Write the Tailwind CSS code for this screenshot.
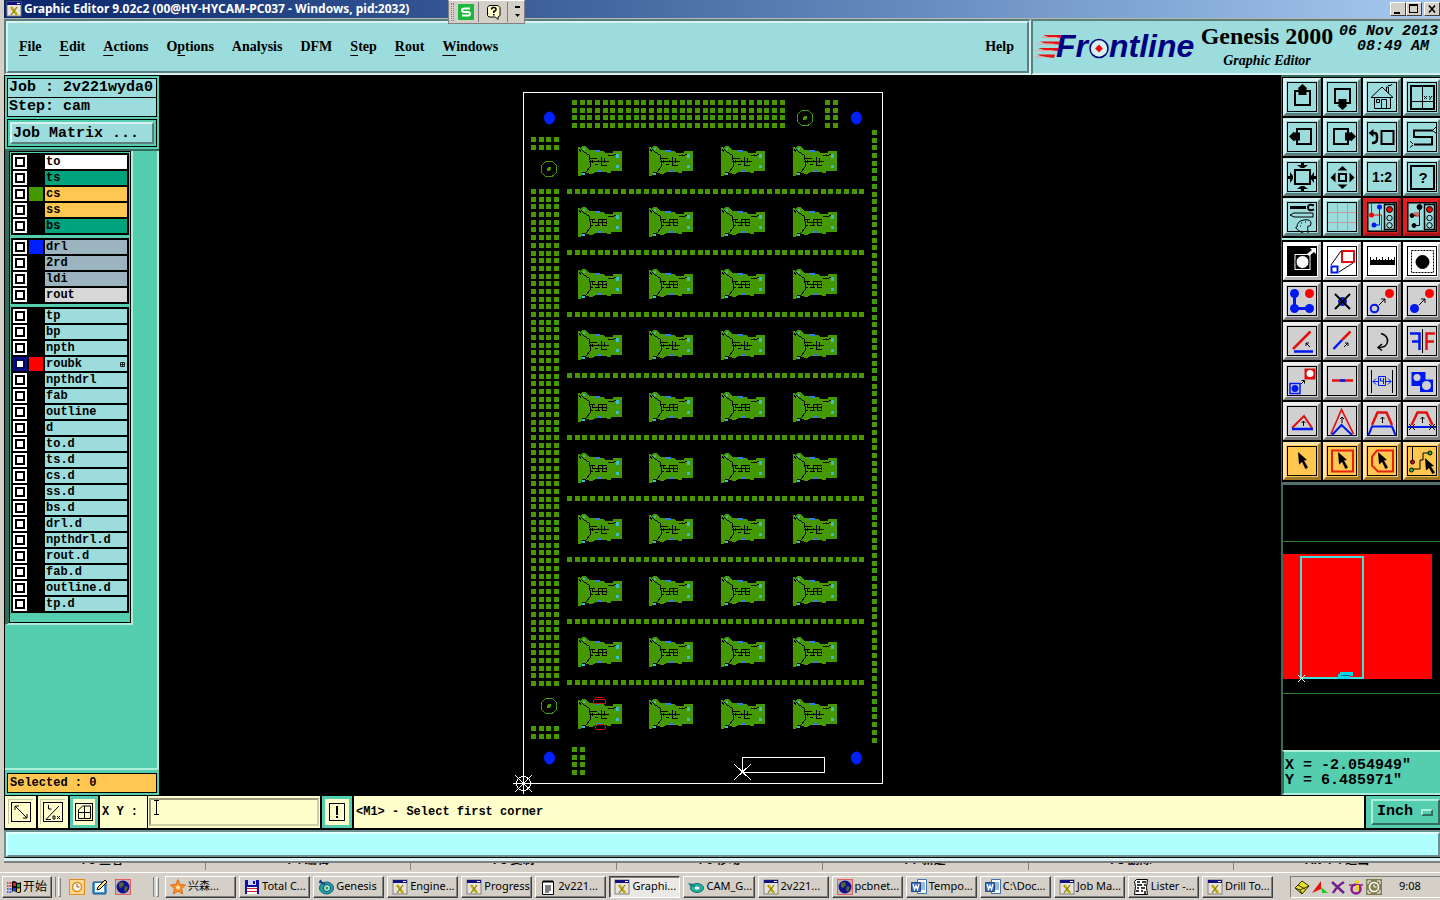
<!DOCTYPE html>
<html lang="en">
<head>
    <meta charset="utf-8">
    <title>Graphic Editor 9.02c2</title>
    <script src="https://cdn.jsdelivr.net/npm/@tailwindcss/browser@4"></script>
</head>
<body class="bg-[#d4d0c8] text-black h-screen flex flex-col overflow-hidden font-['Liberation_Mono',monospace]">

    <!-- Title bar -->
    <header class="h-[19px] shrink-0 ml-1 border-b border-[#b8b8b0] flex items-center bg-linear-to-r from-[#0a246a] to-[#a6caf0] pl-[2px]">
        <svg class="w-4 h-4 shrink-0" viewBox="0 0 16 16"><use href="#i-x"/></svg>
        <h1 class="ml-[2px] flex-1 whitespace-nowrap text-white font-bold text-[12px] leading-[18px] font-['Noto_Sans',sans-serif]">Graphic Editor 9.02c2 (00@HY-HYCAM-PC037 - Windows, pid:2032)</h1>
        <button aria-label="Minimize" class="w-4 h-[14px] bg-[#d4d0c8] border border-t-white border-l-white border-r-[#404040] border-b-[#404040]"><svg class="w-full h-full" viewBox="0 0 14 12"><path d="M3 9h6v2H3z"/></svg></button>
        <button aria-label="Maximize" class="w-4 h-[14px] bg-[#d4d0c8] border border-t-white border-l-white border-r-[#404040] border-b-[#404040]"><svg class="w-full h-full" viewBox="0 0 14 12"><path d="M2 1h9v9H2zM3 3v6h7V3z" fill-rule="evenodd"/></svg></button>
        <button aria-label="Close" class="ml-[2px] w-4 h-[14px] bg-[#d4d0c8] border border-t-white border-l-white border-r-[#404040] border-b-[#404040]"><svg class="w-full h-full" viewBox="0 0 14 12"><path d="M4 2.500l6 7M10 2.500l-6 7" stroke="#000" stroke-width="1.600"/></svg></button>
    </header>

    <!-- Floating input method bar -->
    <div class="absolute left-[448px] top-0 h-6 w-[77px] bg-[#d4d0c8] border border-[#808080] border-t-white flex items-center">
        <span class="ml-[2px] w-[3px] h-[18px] border-l border-r border-dotted border-[#808080]"></span>
        <button aria-label="Input mode" class="ml-1"><svg class="w-4 h-4" viewBox="0 0 16 16"><rect x="0" y="0" width="16" height="16" fill="#1cb83c"/><path d="M12 4.500H6.500Q4 4.500 4 6.200T6.500 8h3q2.500 0 2.500 1.800t-2.500 1.700H4" fill="none" stroke="#fff" stroke-width="2"/></svg></button>
        <span class="ml-1 w-px h-5 bg-[#808080]"></span>
        <button aria-label="Help" class="ml-[7px]"><svg class="w-4 h-4" viewBox="0 0 16 16"><path d="M3 1.500h9l2 2v8l-2 1.500v2.500L9.500 13H3l-1.500-1.500v-8z" fill="#ffffcc" stroke="#000"/><path d="M5.500 5.500Q5.500 3.500 7.800 3.500T10 5.500Q10 7 7.800 7.500v1.500M7.800 10v1.500" fill="none" stroke="#000" stroke-width="1.600"/></svg></button>
        <span class="ml-[5px] w-px h-5 bg-[#808080]"></span>
        <button aria-label="Options" class="ml-[6px]"><svg class="w-[7px] h-3" viewBox="0 0 7 12"><path d="M1 0h5v2H1zM1 8h5L3.500 11z"/></svg></button>
    </div>

    <!-- Menu bar -->
    <div class="h-14 shrink-0 ml-1 flex text-sm font-bold font-['Liberation_Serif',serif]">
        <nav class="flex-1 border-2 border-t-[#5b7f7f] border-l-[#5b7f7f] border-r-[#d7f2f2] border-b-[#d7f2f2]">
            <div class="h-full flex items-center gap-[18px] bg-[#9cdcdc] border-2 border-t-[#d7f2f2] border-l-[#d7f2f2] border-r-[#5b7f7f] border-b-[#5b7f7f] pl-[11px] pr-[13px]">
                <button><u class="underline-offset-4">F</u>ile</button>
                <button><u class="underline-offset-4">E</u>dit</button>
                <button><u class="underline-offset-4">A</u>ctions</button>
                <button>O<u class="underline-offset-4">p</u>tions</button>
                <button>Analysis</button>
                <button>DFM</button>
                <button><u class="underline-offset-4">S</u>tep</button>
                <button><u class="underline-offset-4">R</u>out</button>
                <button><u class="underline-offset-4">W</u>indows</button>
                <button class="ml-auto">Help</button>
            </div>
        </nav>
        <div class="w-[409px] flex bg-[#9cdcdc] border-2 border-r-0 border-t-[#5b7f7f] border-l-[#5b7f7f] border-b-[#d7f2f2]">
            <svg class="w-[164px] h-full shrink-0" viewBox="0 0 164 52" role="img" aria-label="Frontline">
                <path d="M10 14H31l-1 3-15-1zM7 20.500H28l-1 3-15-1zM5 27H27l-1 3-15-1zM4 33.500H22l-1 3.500-12-1.500z" fill="#e81010"/>
                <path d="M8 16.500h16M5 23h16M3 29.500h16M2 36h10" stroke="#f39a9a"/>
                <g fill="#000080" font-family="Liberation Sans" font-weight="bold" font-style="italic" font-size="32">
                    <text x="23" y="36">Fr</text>
                    <text x="76" y="36">ntline</text>
                </g>
                <circle cx="66" cy="27.500" r="9" fill="#d7f2f2" stroke="#000080" stroke-width="1.500"/>
                <path d="M66 23.500l4 4-4 4-4-4z" fill="#e81010"/>
            </svg>
            <div class="w-[140px] shrink-0 flex flex-col items-center whitespace-nowrap">
                <span class="text-2xl leading-[30px] text-center">Genesis 2000</span>
                <span class="italic leading-5">Graphic Editor</span>
            </div>
            <div class="flex-1 pt-[3px] text-[15px] leading-[15px] italic text-center whitespace-nowrap font-['Liberation_Mono',monospace]">06 Nov 2013<br>&nbsp;08:49 AM</div>
        </div>
    </div>

    <main class="flex-1 min-h-0 flex ml-1 bg-black">
        <!-- Job and layers -->
        <aside class="w-[155px] shrink-0 flex flex-col bg-[#55ceb0] border-t border-l border-black font-bold">
            <div class="mx-[2px] mt-[2px] border border-black bg-[#9cdcdc] h-5 pl-px text-[15px] leading-[17px] whitespace-nowrap">Job : 2v221wyda0</div>
            <div class="mx-[2px] -mt-px border border-black bg-[#9cdcdc] h-5 pl-px text-[15px] leading-[18px]">Step: cam</div>
            <div class="mx-[2px] mt-[2px] border border-black p-[2px] shrink-0">
                <button class="block w-full h-[22px] text-left pl-[1px] text-[15px] leading-[17px] bg-[#9cdcdc] border-2 border-t-[#d7f2f2] border-l-[#d7f2f2] border-r-[#5b7f7f] border-b-[#5b7f7f]">Job Matrix ...</button>
            </div>
            <div class="flex-1 mt-[2px] border-t-2 border-[#336b5c] shadow-[inset_-2px_-2px_0_#aeeedd]">
                <div class="w-[128px] border-l-4 border-l-[#336b5c] border-r-2 border-b-2 border-r-[#aeeedd] border-b-[#aeeedd]">
                    <div id="layers" class="border border-black p-px pb-[9px] flex flex-col gap-[3px]"></div>
                </div>
            </div>
            <div class="mx-[2px] mt-[3px] mb-[2px] border border-black bg-[#ffc750] h-5 pl-[2px] text-xs leading-[18px]">Selected : 0</div>
        </aside>

        <!-- Panel view -->
        <svg id="board" class="flex-1 min-w-0 h-full" viewBox="159 75 1122 720" shape-rendering="crispEdges">
            <defs>
                <g id="chip">
                    <path d="M0 1l3 1 1-2h4l3 4h7l1 1h6l3 2h7V5h9v20H33v2h-4v-1H18l-4 2-6-1-3 2-5 1z" fill="#449900"/>
                    <path d="M3 3l3 3 5 3 1 5v7l-4 5-4 1M1 3l2 3M30 10l3-1h3l2-1h3" fill="none" stroke="#000"/>
                    <path d="M17 4h5v2h-5zM20 24h4v2h-4z" fill="#2f7fe8"/>
                    <path d="M38 8h3v4h-3zM38 19h3v3h-3zM4 27h3v2H4zM5 2h2v2H5z" fill="#40b8c8"/>
                </g>
                <path id="core-a" d="M12 12.500h7M11 15.500h20M23.500 11v8M26.500 12v5M17 18.500h3M23 19.500h6M14.500 14v3M20.500 14v2" fill="none" stroke="#000"/>
                <path id="core-b" d="M12 12.500h5M20 12.500h9M14 15.500h15M12 18.500h3M17 18.500h5M24 18.500h5M14.500 12v3M20.500 12v7M24.500 12v7M28.500 14v3" fill="none" stroke="#000"/>
            </defs>
            <rect x="523.500" y="92.500" width="359" height="691" fill="none" stroke="#fff"/>
            <g id="pads" fill="#449900"></g>
            <g id="chips"></g>
            <g fill="#0020ff" shape-rendering="auto">
                <ellipse cx="549.500" cy="118" rx="5.500" ry="6.500"/>
                <ellipse cx="856.500" cy="118" rx="5.500" ry="6.500"/>
                <ellipse cx="549.500" cy="758" rx="5.500" ry="6.500"/>
                <ellipse cx="856.500" cy="758" rx="5.500" ry="6.500"/>
            </g>
            <g fill="none" stroke="#449900">
                <circle cx="549" cy="169" r="8"/><circle cx="549" cy="169" r="1.500" fill="#449900"/>
                <circle cx="805" cy="118" r="8"/><circle cx="805" cy="118" r="1.500" fill="#449900"/>
                <circle cx="549" cy="706" r="8"/><circle cx="549" cy="706" r="1.500" fill="#449900"/>
            </g>
            <path d="M595 697.500h8M593.500 703.500v-3l2-1.500h8l2 1.500v3zM595.500 726.500l2-2h6l2 2v2l-1 1h-8l-1-1z" fill="none" stroke="#d01010"/>
            <g fill="none" stroke="#fff">
                <rect x="742.500" y="757.500" width="82" height="15"/>
                <path d="M734 764l17 16M751 764l-17 16"/>
                <circle cx="523.500" cy="783.500" r="7"/>
                <path d="M523.500 773v21M513 783.500h21M515 775l17 17M532 775l-17 17"/>
            </g>
        </svg>

        <!-- Tools -->
        <aside class="w-[159px] shrink-0 flex flex-col border-l border-[#336b5c] overflow-hidden">
            <div class="border-t-2 border-[#336b5c] pt-px pl-px">
                <div id="view-tools" class="grid grid-cols-[repeat(4,38px)] gap-[2px]"></div>
            </div>
            <div class="mt-[2px] h-[2px] shrink-0 bg-[#aeeedd]"></div>
            <div class="pt-[2px] pl-px">
                <div id="edit-tools" class="grid grid-cols-[repeat(4,38px)] gap-[2px]"></div>
            </div>
            <div class="mt-[2px] h-[3px] shrink-0 bg-[#55706c]"></div>
            <div class="flex-1 min-h-0 border-l border-[#336b5c]">
                <svg class="w-full h-full" viewBox="1283 485 157 265" shape-rendering="crispEdges">
                    <path d="M1283 541.500h157M1283 693.500h157" stroke="#1f7a20"/>
                    <rect x="1283" y="554" width="149" height="125" fill="#f00"/>
                    <rect x="1301" y="557" width="62" height="121" fill="none" stroke="#40e0e0" stroke-width="2"/>
                    <path d="M1338 674h2v-2h13v4h-3v3h-12z" fill="#00d8e8"/>
                    <path d="M1341 675.500h9" stroke="#086070"/>
                    <path d="M1298 675l7 7M1305 675l-7 7" stroke="#fff"/>
                </svg>
            </div>
            <div class="h-[45px] shrink-0 border-2 border-r-0 border-t-[#aeeedd] border-l-[#336b5c] border-b-[#aeeedd] bg-[#55ceb0] pl-[1px] pt-[6px] text-[15px] leading-[15px] font-bold whitespace-pre">X = -2.054949"
Y = 6.485971"</div>
        </aside>
    </main>

    <!-- Coordinate entry and prompt -->
    <div class="h-[35px] shrink-0 ml-1 bg-black pl-px pt-px pb-[2px] flex gap-[2px] text-xs font-bold">
        <button aria-label="Pan" class="w-[31px] bg-[#ffffcc] flex items-center justify-center"><svg class="w-[26px] h-[26px]" viewBox="0 0 26 26" fill="none" stroke="#000"><path d="M.500 25V.500H25" stroke="#c8c8a0"/><rect x="3.500" y="3.500" width="19" height="19"/><path d="M7 7l12 12M7 11V7h4M19 15v4h-4"/></svg></button>
        <button aria-label="Angle snap" class="w-[30px] bg-[#ffffcc] flex items-center justify-center"><svg class="w-[26px] h-[26px]" viewBox="0 0 26 26" fill="none" stroke="#000"><path d="M.500 25V.500H25" stroke="#c8c8a0"/><rect x="3.500" y="3.500" width="19" height="19"/><path d="M6 20.500L19 7M6 20.500h5M8.500 6v4h3M13 17h2v3h-2zM17 17l3 3M20 17l-3 3"/></svg></button>
        <button aria-label="Grid snap" class="w-[28px] bg-[#ffffcc] border-[3px] border-[#55ceb0] flex items-center justify-center"><svg class="w-[22px] h-[22px]" viewBox="0 0 22 22" fill="none" stroke="#000"><rect x="2.500" y="2.500" width="17" height="17"/><path d="M5.500 17.500V9l4-4h8v12.500zM11.500 5v12M5 11.500h12"/></svg></button>
        <div class="relative flex bg-[#ffffcc] pl-[2px]">
            <label for="xy" class="w-[46px] leading-8 whitespace-nowrap border-r border-black">X Y :</label>
            <input id="xy" type="text" class="w-[170px] my-[2px] mx-[1px] bg-[#ffffcc] border-2 border-t-[#98987a] border-l-[#98987a] border-r-[#d0d0a8] border-b-[#d0d0a8] outline-none pl-1">
            <svg class="absolute left-[54px] top-1 w-[5px] h-4" viewBox="0 0 5 16"><path d="M0 .500h5M0 14.500h5M2.500 0v15" stroke="#000"/></svg>
        </div>
        <button aria-label="Confirm" class="w-[30px] bg-[#ffffcc] border-[3px] border-[#55ceb0] flex items-center justify-center"><svg class="w-6 h-6" viewBox="0 0 24 24"><rect x="4.500" y="3.500" width="15" height="17" fill="none" stroke="#000"/><path d="M11 6h2v9h-2zM11 16h2v2h-2z"/></svg></button>
        <p class="flex-1 bg-[#ffffcc] pl-[2px] leading-8">&lt;M1&gt; - Select first corner</p>
        <div class="relative w-[74px] bg-[#55ceb0] pt-[3px] pb-[3px] pl-[5px]">
            <select aria-label="Units" class="appearance-none w-full h-full bg-[#55ceb0] border-2 border-t-[#aeeedd] border-l-[#aeeedd] border-r-[#336b5c] border-b-[#336b5c] pl-1 text-[15px] leading-5 font-bold outline-none">
                <option>Inch</option>
                <option>MM</option>
            </select>
            <span class="absolute right-[7px] top-[13px] w-3 h-[7px] border-2 border-t-[#aeeedd] border-l-[#aeeedd] border-r-[#336b5c] border-b-[#336b5c] pointer-events-none"></span>
        </div>
    </div>

    <div class="h-[33px] shrink-0 ml-1 border-t-2 border-[#6a9090] border-b-2 border-b-[#808080] bg-[#d7f2f2] pb-[3px]">
        <div class="h-full border-l-2 border-l-[#6a9090] border-b border-b-black">
            <div class="h-full bg-[#b0ffff] border-2 border-t-[#e0ffff] border-l-[#e0ffff] border-r-[#6a9090] border-b-[#6a9090]"></div>
        </div>
    </div>

    <!-- Function keys of the window behind -->
    <div class="h-[9px] shrink-0 pb-[2px] grid grid-cols-7 text-[12px] leading-[11px] font-bold font-['Liberation_Sans','Noto_Sans_CJK_SC',sans-serif]">
        <div class="border-r border-[#808080]"><span class="h-[3px] flex items-end justify-center overflow-hidden">F3 查看</span></div>
        <div class="border-r border-[#808080]"><span class="h-[3px] flex items-end justify-center overflow-hidden">F4 编辑</span></div>
        <div class="border-r border-[#808080]"><span class="h-[3px] flex items-end justify-center overflow-hidden">F5 复制</span></div>
        <div class="border-r border-[#808080]"><span class="h-[3px] flex items-end justify-center overflow-hidden">F6 移动</span></div>
        <div class="border-r border-[#808080]"><span class="h-[3px] flex items-end justify-center overflow-hidden">F7 新建</span></div>
        <div class="border-r border-[#808080]"><span class="h-[3px] flex items-end justify-center overflow-hidden">F8 删除</span></div>
        <div><span class="h-[3px] flex items-end justify-center overflow-hidden">Alt+F4 退出</span></div>
    </div>

    <!-- Taskbar -->
    <footer class="h-7 shrink-0 border-t border-white flex items-center pl-[2px] text-[11px] font-['Noto_Sans','Noto_Sans_CJK_SC',sans-serif]">
        <button class="w-[50px] h-[22px] flex items-center pl-[3px] gap-px text-[12px] whitespace-nowrap border border-t-white border-l-white border-b-[#404040] border-r-[#404040] shadow-[inset_-1px_-1px_0_#808080]">
            <svg class="w-4 h-4 shrink-0" viewBox="0 0 16 16"><path d="M6 3q2-2 4 0t5 0v10q-2 2-5 0t-4 0z"/><path d="M7 4q1.500-1 3 0v3.500q-1.500-1-3 0z" fill="#e02020"/><path d="M11 4.500q1 1 3 0V8q-2 1-3 0z" fill="#20b020"/><path d="M7 9q1.500-1 3 0v3.500q-1.500-1-3 0z" fill="#2040e0"/><path d="M11 9q1 1 3 0v3.500q-2 1-3 0z" fill="#f0d020"/><path d="M1 4h1.500M3.500 4h2M1 7h1.500M3.500 7h2" stroke="#e02020" stroke-width="1.500"/><path d="M1 10h1.500M3.500 10h2M1 13h1.500M3.500 13h2" stroke="#2040e0" stroke-width="1.500"/></svg>
            开始
        </button>
        <span class="ml-[3px] w-px h-5 bg-[#808080]"></span>
        <span class="ml-[2px] w-[3px] h-5 border border-t-white border-l-white border-r-[#808080] border-b-[#808080]"></span>
        <span class="ml-[8px] mr-[22px] flex gap-[7px]">
            <button aria-label="Outlook"><svg class="w-4 h-4" viewBox="0 0 16 16"><rect x=".500" y=".500" width="15" height="15" fill="#ffd890" stroke="#e08a20"/><circle cx="8" cy="8" r="4.500" fill="#fff" stroke="#e08a20" stroke-width="1.500"/><path d="M8 5v3h2.500" fill="none" stroke="#a05010"/></svg></button>
            <button aria-label="Show desktop"><svg class="w-4 h-4" viewBox="0 0 16 16"><rect x="1" y="3" width="13" height="12" rx="1" fill="#3aa0e0" stroke="#104080"/><path d="M3 4h9v9H3z" fill="#fff"/><path d="M5 11l1-3 7-7 2 2-7 7z" fill="#ffe060" stroke="#000"/></svg></button>
            <button aria-label="Browser"><svg class="w-4 h-4" viewBox="0 0 16 16"><use href="#i-globe"/></svg></button>
        </span>
        <span class="ml-auto w-px h-5 bg-[#808080]"></span>
        <span class="ml-[2px] w-[3px] h-5 border border-t-white border-l-white border-r-[#808080] border-b-[#808080]"></span>
        <div id="tasks" class="ml-[6px] flex-1 min-w-0 flex gap-[3px]"></div>
        <div class="ml-[17px] w-[150px] h-[22px] shrink-0 flex items-center gap-[2px] pl-[3px] border border-r-0 border-t-[#808080] border-l-[#808080] border-b-white">
            <svg class="w-4 h-4" viewBox="0 0 16 16"><path d="M1 9l7-7 7 5-7 8z" fill="#e8e020" stroke="#303000"/><path d="M1 9l5 2 9-4M6 11l2 4M4 6l7 4" fill="none" stroke="#303000"/></svg>
            <svg class="w-4 h-4" viewBox="0 0 16 16"><path d="M0 14L9 2v8z" fill="#e81010"/><path d="M9 8l7 6h-6z" fill="#20c820"/></svg>
            <svg class="w-4 h-4" viewBox="0 0 16 16"><path d="M2 3l12 11M14 3Q7 7 3 14" stroke="#702090" stroke-width="2.500" fill="none"/></svg>
            <svg class="w-4 h-4" viewBox="0 0 16 16"><circle cx="8" cy="10" r="4.500" fill="none" stroke="#901890" stroke-width="2.500"/><path d="M1 6h5M10 6h5" stroke="#901890" stroke-width="1.500"/><circle cx="9" cy="3" r="2" fill="#f0d020"/><path d="M8 6h3v6H7z" fill="#f0d020"/></svg>
            <svg class="w-4 h-4" viewBox="0 0 16 16"><rect width="16" height="16" fill="#808050"/><circle cx="8" cy="8" r="4.500" fill="none" stroke="#fff" stroke-width="1.500"/><path d="M8 5.500V8h2.500M2 5V2h3M11 2h3v3M2 11v3h3M14 11v3h-3" fill="none" stroke="#fff"/></svg>
            <time class="ml-[15px]">9:08</time>
        </div>
    </footer>

    <!-- Shared icons -->
    <svg class="hidden">
        <symbol id="i-x" viewBox="0 0 16 16"><rect x="1" y="1" width="14" height="14" fill="#e8e4dc" stroke="#808080"/><path d="M1 1h14v3H1z" fill="#101080"/><path d="M11 2h3v1h-3z" fill="#fff"/><path d="M5 6l6 8" stroke="#b8a800" stroke-width="2.500"/><path d="M11 6l-6 8" stroke="#807800" stroke-width="1.200"/></symbol>
        <symbol id="i-globe" viewBox="0 0 16 16"><rect x=".500" y=".500" width="15" height="15" fill="#c8b0b0" stroke="#e06060"/><circle cx="8" cy="8" r="6.500" fill="#101090"/><path d="M4 4l4-1 1 3-3 3-2-1zM10 7l3 1-2 5-2-2z" fill="#506830"/></symbol>
        <symbol id="i-star" viewBox="0 0 16 16"><path d="M8 .500l2.200 5 5.300.500-4 3.600 1.200 5.400L8 12.200 3.300 15l1.200-5.400-4-3.600 5.300-.500z" fill="#f89030" stroke="#e06810"/><circle cx="8" cy="8.500" r="2" fill="#ffe0a0"/></symbol>
        <symbol id="i-disk" viewBox="0 0 16 16"><path d="M1 1h14v14H1z" fill="#1010a0"/><path d="M4 1h8v5H4z" fill="#d0d0ff"/><path d="M9 2h2v3H9z" fill="#1010a0"/><path d="M3 8h10v7H3z" fill="#fff"/><path d="M3 9h10v1H3zM3 12h10v1H3z" fill="#e02020"/></symbol>
        <symbol id="i-genesis" viewBox="0 0 16 16"><ellipse cx="8.500" cy="9" rx="7" ry="6" fill="#20a0a0" stroke="#106070"/><circle cx="9" cy="9" r="3.500" fill="#c0f0e0" stroke="#104080"/><circle cx="9" cy="9" r="1.500" fill="#20a040"/><path d="M1 3l6 2M2 1l3 4" stroke="#104080" stroke-width="1.500"/></symbol>
        <symbol id="i-cam" viewBox="0 0 16 16"><ellipse cx="9" cy="9" rx="6.500" ry="4.500" fill="#20b0a0" stroke="#107070"/><ellipse cx="9" cy="9" rx="2.500" ry="1.500" fill="#fff"/><path d="M0 4l6 1 1 3-5-1z" fill="#108080"/></symbol>
        <symbol id="i-note" viewBox="0 0 16 16"><path d="M2.500 2.500h11v13h-11z" fill="#fff" stroke="#000"/><path d="M4 1v3M6 1v3M8 1v3M10 1v3M12 1v3M5 7h6M5 9h6M5 11h6M5 13h4" stroke="#000"/></symbol>
        <symbol id="i-word" viewBox="0 0 16 16"><path d="M6.500.500h9v14h-9z" fill="#fff" stroke="#4070b0"/><path d="M10 4h4M10 6h4M10 8h4M10 10h4" stroke="#4070b0"/><path d="M.500 3.500h9v9h-9z" fill="#3a6ec0" stroke="#204880"/><path d="M2 5l1.500 5.500L5 6.500l1.500 4L8 5" fill="none" stroke="#fff" stroke-width="1.300"/></symbol>
        <symbol id="i-lister" viewBox="0 0 16 16"><path d="M3.500.500h11l-1 8 1 7H1.500l1-8-1-5z" fill="#fff" stroke="#000"/><path d="M4 3h3M9 3h4M4 6h5M11 6h2M4 9h2M8 9h4M3 12h3M8 12h2M12 12v3" stroke="#000" stroke-width="1.500"/></symbol>
    </svg>

    <script>
        // Layer list: [name, row colour, swatch]
        const groups = [
            [["to", "#ffffff"], ["ts", "#00a47c"], ["cs", "#ffc750", "#449900"], ["ss", "#ffc750"], ["bs", "#00a47c"]],
            [["drl", "#9bb4c0", "#0020ff"], ["2rd", "#9bb4c0"], ["ldi", "#9bb4c0"], ["rout", "#d8d8d8"]],
            ["tp", "bp", "npth", "roubk", "npthdrl", "fab", "outline", "d", "to.d", "ts.d", "cs.d", "ss.d", "bs.d", "drl.d",
             "npthdrl.d", "rout.d", "fab.d", "outline.d", "tp.d"].map(n => [n, "#9cdcdc", n === "roubk" ? "#ff0000" : "#000000"])
        ];

        document.getElementById("layers").innerHTML = groups.map(rows => `
            <div class="bg-black p-[2px] flex flex-col gap-[2px]">${rows.map(([name, bg, swatch]) => `
                <div class="flex gap-[2px] h-[14px]">
                    <input type="checkbox" id="layer-${name}" ${name === "roubk" ? "checked" : ""} class="appearance-none w-[14px] h-[14px] shrink-0 bg-white border-2 border-white shadow-[inset_0_0_0_2px_#000] checked:border-[#001090] checked:shadow-[inset_0_0_0_2px_#00085a]">
                    <span class="w-[14px] shrink-0" style="background:${swatch || "#000"}"></span>
                    <label for="layer-${name}" class="flex-1 flex items-center justify-between pl-px pr-[2px] text-xs leading-[14px]" style="background:${bg}">${name}${name === "roubk" ? `<svg class="w-[5px] h-[5px]" viewBox="0 0 5 5"><path d="M.500.500h4v4h-4zM2.500 0v5M0 2.500h5" fill="none" stroke="#000" stroke-width=".800"/></svg>` : ""}</label>
                </div>`).join("")}
            </div>`).join("");

        // Board copper
        const PITCH = 7.69;
        let pads = "";
        function padGrid(x, y, cols, rows) {
            for (let r = 0; r < rows; r++)
                for (let c = 0; c < cols; c++)
                    pads += `<rect x="${Math.round(x + c * PITCH)}" y="${Math.round(y + r * PITCH)}" width="5" height="5"/>`;
        }
        padGrid(572, 100, 28, 4);
        padGrid(825, 100, 2, 4);
        padGrid(531, 137, 4, 2);
        padGrid(531, 189, 4, 65);
        padGrid(531, 726, 4, 2);
        padGrid(572, 747, 2, 4);
        padGrid(872, 130, 1, 80);
        for (let i = 0; i < 9; i++) padGrid(567, 189 + i * 61.4, 39, 1);
        document.getElementById("pads").innerHTML = pads;

        let chips = "";
        for (let r = 0; r < 10; r++)
            for (let c = 0; c < 4; c++) {
                const at = `x="${Math.round(577.6 + c * 71.7)}" y="${Math.round(146 + r * 61.4)}"`;
                chips += `<use href="#chip" ${at}/><use href="#core-${r % 3 ? "b" : "a"}" ${at}/>`;
            }
        document.getElementById("chips").innerHTML = chips;

        // Tool icons, drawn in a 32x32 box
        const frame = `<rect x="1.500" y="1.500" width="29" height="29"/>`;
        const cursor = `<path d="M12 7l9 8-3 .500 4 7-2.500 1.500-3.500-7-3 2.500z" fill="#000" stroke="none"/>`;
        const lights = `<rect x="18.500" y="3.500" width="10" height="25" stroke-width="1.500"/><circle cx="23.500" cy="8.500" r="3" fill="#f00"/><circle cx="23.500" cy="17" r="2.700"/><circle cx="23.500" cy="24.300" r="2.700"/>`;
        const viewTools = [
            ["Pan up", `<rect x="9" y="10" width="15" height="14" stroke-width="2"/><path d="M16.500 3l5 4.500h-1V14h-8V7.500h-1z" fill="#000" stroke="none"/>`],
            ["Pan down", `<rect x="9" y="8" width="15" height="14" stroke-width="2"/><path d="M16.500 29l5-4.500h-1V18h-8v6.500h-1z" fill="#000" stroke="none"/>`],
            ["Home", `<path d="M5 16.500L16 6l11 10.500zM8.500 16v11.500h16V16M15.500 27.500V18.500h5v9M10.500 18.500h3v3h-3zM20.500 10V6h2v6M22 4.500h3l1-1.500"/>`],
            ["Window zoom", `<rect x="5" y="5" width="23" height="23" stroke-width="2"/><path d="M16.500 5v23M5 20.500h23"/><path d="M18 15l3 3M21 15l-3 3M23 15l1.500 2L26 15M24.500 17l-1 2" stroke-width=".900"/>`],
            ["Pan left", `<rect x="11" y="8" width="14" height="15" stroke-width="2"/><path d="M3 15.500l5-5v1h6v8H8v1z" fill="#000" stroke="none"/>`],
            ["Pan right", `<rect x="8" y="8" width="14" height="15" stroke-width="2"/><path d="M30 15.500l-5-5v1h-6v8h6v1z" fill="#000" stroke="none"/>`],
            ["Previous view", `<rect x="15.500" y="10" width="12" height="13" stroke-width="2"/><path d="M6 12h2q3 0 3 3v3q0 4-5 4" stroke-width="2.500"/><path d="M2.500 12l5-4v8z" fill="#000" stroke="none"/>`],
            ["Serpentine view", `<path d="M27 9.500H8v6.500h18v7.500H8" stroke-width="2"/><path d="M27 9l3-3M27 10l3 2M7 23l-3-3M7 24l-3 2.500"/>`],
            ["Zoom out", `<rect x="9" y="9" width="15" height="14" stroke-width="2"/><path d="M15 2h3v2h4l-4 3h-3l-4-3h4zM15 30h3v-2h4l-4-3h-3l-4 3h4zM2 15v3h2v4l3-4v-3l-3-4v4zM30 15v3h-2v4l-3-4v-3l3-4v4z" fill="#000" stroke="none"/>`],
            ["Zoom in", `<rect x="13" y="13" width="7" height="7" stroke-width="2"/><path d="M11.500 9.500l5-4.500 5 4.500zM11.500 23.500l5 4.500 5-4.500zM9.500 11.500l-5 5 5 5zM23.500 11.500l5 5-5 5z" fill="#000" stroke="none"/>`],
            ["Zoom 1:2", `<text x="16" y="21" text-anchor="middle" font-family="Liberation Sans" font-size="14" font-weight="bold" fill="#000" stroke="none">1:2</text>`],
            ["Query", `<rect x="5" y="5" width="23" height="23" stroke-width="2"/><text x="17" y="22" text-anchor="middle" font-family="Liberation Sans" font-size="15" font-weight="bold" fill="#000" stroke="none">?</text>`],
            ["Setup", `<path d="M4 6.500h16" stroke-width="3"/><path d="M28 4.500q-6-2-6 2t6 2" stroke-width="2"/><path d="M4 14l4-2h19v4H8z"/><path d="M11 26q0-6 7-7t7 3-2 3-1 5-7 1-4-5zM15 22h1M19 21h1M14 25h1"/>`],
            ["Grid", `<path d="M11.500 2v28M21.500 2v28M2 11.500h28M2 21.500h28" stroke="#c09a98"/>`],
            ["Nets", `<path d="M5.500 2v12h10v16" stroke="#e01010"/><circle cx="5.500" cy="14" r="2.500" fill="#f00" stroke="none"/><path d="M13.500 6v18H8" stroke="#0018f0"/><circle cx="13.500" cy="6" r="2.500" fill="#0018f0" stroke="none"/><circle cx="8" cy="24" r="2.500" fill="#0018f0" stroke="none"/>${lights}`, "bg-[#e02020]"],
            ["Net check", `<path d="M13.500 6v18.500H8M6 14.500h4"/><circle cx="13.500" cy="6" r="2.500" fill="#000"/><circle cx="6" cy="14.500" r="2" fill="#000"/><circle cx="8" cy="24.500" r="2" fill="#000"/><path d="M9 11v4h4M11 11v4M13 11v4" stroke="#e01010"/>${lights}`, "bg-[#e02020]"]
        ];
        const white = "bg-white", orange = "bg-[#ffc750]";
        const editTools = [
            ["Features histogram", `<path d="M2 2h28v28H2z" fill="#000"/><rect x="9" y="9.500" width="15" height="15" stroke="#fff"/><circle cx="16.500" cy="17" r="6.500" fill="#fff"/><path d="M21 9l5-4-2-2h6v6l-2-2-5 4z" fill="#fff" stroke="none"/>`, white],
            ["Scale", `<rect x="16" y="6" width="12" height="11" stroke="#e01010" stroke-width="2"/><rect x="5.500" y="21.500" width="6" height="6" stroke="#0018f0" stroke-width="2"/><path d="M5 20L15 6M13 27l14-9"/>`, white],
            ["Measure", `<path d="M4 17.500h25" stroke-width="5"/><path d="M4.500 12v5M7.500 14v3M10.500 12v5M13.500 14v3M16.500 12v5M19.500 14v3M22.500 12v5M25.500 14v3M28.500 12v5"/>`, white],
            ["Select feature", `<rect x="5.500" y="5.500" width="22" height="22" stroke-dasharray="2 1"/><circle cx="16.500" cy="17" r="6.500" fill="#000"/>`, white],
            ["Net points", `<path d="M8.500 8v15.500H24" stroke="#0018f0" stroke-width="3"/><g fill="#0018f0" stroke="none"><circle cx="8.500" cy="8.500" r="4.500"/><circle cx="8.500" cy="23.500" r="4.500"/><circle cx="23.500" cy="23.500" r="4.500"/></g><circle cx="23.500" cy="8.500" r="4.500" fill="#f00" stroke="none"/>`],
            ["Delete", `<circle cx="16.500" cy="16.500" r="4.500" fill="#1020c0" stroke="none"/><path d="M9 9l15 15M24 9L9 24" stroke-width="2"/>`],
            ["Move", `<circle cx="23.500" cy="8.500" r="4.500" fill="#f00" stroke="none"/><circle cx="8.500" cy="23.500" r="3.800" stroke="#0018f0" stroke-width="2"/><path d="M13 20l6-6M15 14h4v4"/>`],
            ["Copy", `<circle cx="23.500" cy="8.500" r="4.500" fill="#f00" stroke="none"/><circle cx="8.500" cy="23.500" r="4.500" fill="#0018f0" stroke="none"/><path d="M13 20l6-6M15 14h4v4"/>`],
            ["Rotate", `<path d="M7 24L24.500 6.500" stroke="#e01010" stroke-width="2.500"/><path d="M8 26.500h19" stroke="#0018f0" stroke-width="2.500"/><path d="M24 22l-4-4M20 21v-3h3"/>`],
            ["Stretch line", `<path d="M16 15l8.500-8.500" stroke="#e01010" stroke-width="2.500"/><path d="M7.500 24L16 15" stroke="#0018f0" stroke-width="2.500"/><path d="M18 22l4-4M19 18h3v3"/>`],
            ["Arc", `<path d="M15 8.500q7 2 6.500 8t-9 6" stroke-width="1.500"/><path d="M16 19l-4 3.500 4 3" stroke-width="1.500"/>`],
            ["Mirror", `<path d="M4 8.500h9.500V25M6 16.500h7" stroke="#0018f0" stroke-width="2.500"/><path d="M16.500 4v24"/><path d="M29 8.500h-8.500V25M28 16.500h-7" stroke="#e01010" stroke-width="2.500"/>`],
            ["Transform", `<path d="M18.500 3.500h11v11h-11z" fill="#e01010" stroke="none"/><circle cx="24" cy="8.500" r="3.500" fill="#fff" stroke="none"/><rect x="4" y="18.500" width="10" height="10" stroke="#0018f0" stroke-width="1.500"/><circle cx="9" cy="23.500" r="3.500" fill="#0018f0" stroke="none"/><path d="M15 19l3-3M15.500 15.500h3v3"/>`],
            ["Break", `<path d="M6 15.500h21" stroke="#e01010" stroke-width="2.500"/><path d="M14 15.500h5" stroke="#2020d0" stroke-width="3"/>`],
            ["Spacing", `<path d="M5.500 5v23M26.500 5v23"/><path d="M7 16.500h5M20 16.500h5M10 13.500l-3 3 3 3M22 13.500l3 3-3 3M12.500 11.500h7v9h-7zM14.500 13v3h3M17.500 13v6" stroke="#0018f0"/>`],
            ["Union", `<path d="M5.500 7h14v7.500H27V27H14v-6H5.500z" fill="#0018f0" stroke="none"/><circle cx="11" cy="12.500" r="3.500" fill="#d0d0d0" stroke="none"/><circle cx="20.500" cy="20.500" r="4.500" fill="#d0d0d0" stroke="none"/>`],
            ["Triangle", `<path d="M6 23l12-12 8 12" stroke="#e01010" stroke-width="2"/><path d="M6 24h21" stroke="#0018f0" stroke-width="2.500"/><path d="M17.500 21v-5M15.500 18l2-2 2 2"/>`],
            ["Corner", `<path d="M5 29L15.500 4.500 27.500 29" stroke="#e01010" stroke-width="1.700"/><path d="M6 30l9.500-10L26 30" stroke="#0018f0" stroke-width="2"/><path d="M16 18v-6M14 14l2-2 2 2"/>`],
            ["Trapezoid", `<path d="M6 20l5.500-12.500h9L26 20" stroke="#e01010" stroke-width="2.500"/><path d="M2.500 30L6 21.500h20L29.500 30" stroke="#0018f0" stroke-width="2"/><path d="M16.500 18v-6M14.500 14l2-2 2 2"/>`],
            ["Trim", `<path d="M5.500 20l6-12.500h9l6 12.500" stroke="#e01010" stroke-width="2.500"/><path d="M2 22h28" stroke="#0018f0" stroke-width="2"/><path d="M3 19l6 6M9 19l-6 6M23 19l6 6M29 19l-6 6M16.500 18v-6M14.500 14l2-2 2 2"/>`],
            ["Select", cursor, orange],
            ["Select in box", `<rect x="6" y="5.500" width="21" height="21" stroke="#e82010" stroke-width="2"/>${cursor}`, orange],
            ["Select in polygon", `<path d="M11 5.500h16v21H12l-6-6v-9z" stroke="#e82010" stroke-width="2"/>${cursor}`, orange],
            ["Select net", `<path d="M6.500 2v14M7 24h7v-9h3v-7h6"/><circle cx="6.500" cy="17" r="2" fill="#e01010"/><circle cx="5.500" cy="25" r="2" fill="#20c020"/><circle cx="24" cy="8" r="2" fill="#20c020"/><path d="M19 13l9 8-3 .500 4 6-2.500 1.500-3.500-6-3 2.500z" fill="#000" stroke="none"/>`, orange]
        ];

        const bevels = {
            "bg-white": "border-t-[#ffffff] border-l-[#ffffff] border-r-[#b8b8b8] border-b-[#b8b8b8]",
            "bg-[#ffc750]": "border-t-[#ffe4a8] border-l-[#ffe4a8] border-r-[#a07828] border-b-[#a07828]",
            "bg-[#d0d0d0]": "border-t-[#eeeeee] border-l-[#eeeeee] border-r-[#808080] border-b-[#808080]",
            "bg-[#9cdcdc]": "border-t-[#d7f2f2] border-l-[#d7f2f2] border-r-[#5b7f7f] border-b-[#5b7f7f]",
            "bg-[#e02020]": "border-t-[#e02020] border-l-[#e02020] border-r-[#a01818] border-b-[#a01818]"
        };
        function drawTools(id, tools, base) {
            document.getElementById(id).innerHTML = tools.map(([label, body, bg = base]) => `
                <button aria-label="${label}" class="w-[38px] h-[38px] border-[3px] ${bg} ${bevels[bg]}">
                    <svg class="w-8 h-8" viewBox="0 0 32 32" fill="none" stroke="#000">${bg === "bg-[#e02020]" ? `<path d="M2 2h28v28H2z" fill="#9cdcdc"/>` : ""}${frame}${body}</svg>
                </button>`).join("");
        }
        drawTools("view-tools", viewTools, "bg-[#9cdcdc]");
        drawTools("edit-tools", editTools, "bg-[#d0d0d0]");

        // Taskbar windows
        const tasks = [["star", "兴森..."], ["disk", "Total C..."], ["genesis", "Genesis"], ["x", "Engine..."], ["x", "Progress"],
            ["note", "2v221..."], ["x", "Graphi...", true], ["cam", "CAM_G..."], ["x", "2v221..."], ["globe", "pcbnet..."],
            ["word", "Tempo..."], ["word", "C:\\Doc..."], ["x", "Job Ma..."], ["lister", "Lister -..."], ["x", "Drill To..."]];
        document.getElementById("tasks").innerHTML = tasks.map(([icon, text, active]) => `
            <button class="flex-1 min-w-0 h-[22px] flex items-center gap-[2px] pl-1 whitespace-nowrap overflow-hidden border ${active
                ? "bg-[#ebe9e4] border-t-[#404040] border-l-[#404040] border-b-white border-r-white shadow-[inset_1px_1px_0_#808080]"
                : "border-t-white border-l-white border-b-[#404040] border-r-[#404040] shadow-[inset_-1px_-1px_0_#808080]"}">
                <svg class="w-4 h-4 shrink-0"><use href="#i-${icon}"/></svg>${text}
            </button>`).join("");
    </script>
</body>
</html>
